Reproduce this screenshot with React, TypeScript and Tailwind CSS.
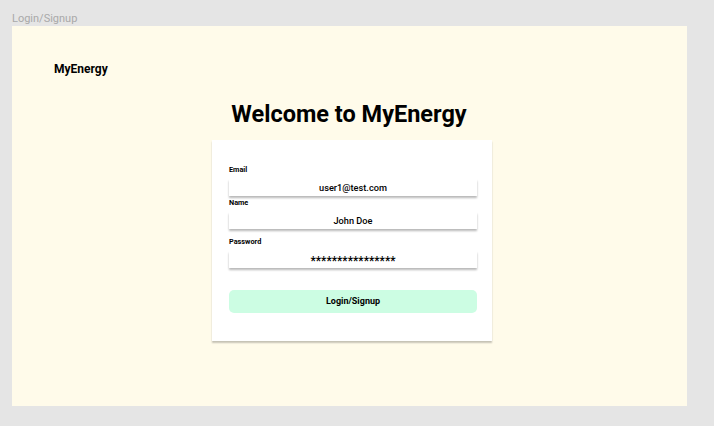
type FieldProps = {
    label: string,
    value: string,
    valueClass?: string,
};

function Field({ label, value, valueClass = "text-[9.2px]" }: FieldProps) {
    return (
        <div className="flex flex-col">
            <label className="text-[7.3px] leading-[8px] font-bold text-black mb-[5px]">{label}</label>
            <div className={`h-[17px] w-full bg-white flex items-center justify-center shadow-[0_1.5px_2px_rgba(0,0,0,0.28)] font-medium text-black ${valueClass}`}>
                {value}
            </div>
        </div>
    );
}

export default function App() {
    return (
        <div className="w-[714px] h-[426px] bg-[#e5e5e5] font-['Roboto',sans-serif] flex flex-col px-3 pt-3">
            <p className="text-[11px] leading-[13px] text-[#a9a9a9] mb-[1px]">Login/Signup</p>
            <main className="w-[675px] h-[380px] bg-[#fffbea] flex flex-col">
                <header className="pl-[42px] pt-[36px]">
                    <h2 className="text-[12px] leading-[14px] font-bold text-black">MyEnergy</h2>
                </header>
                <h1 className="mt-[24px] text-center text-[23.5px] leading-[28px] font-bold text-black pr-[1px]">Welcome to MyEnergy</h1>
                <section className="mt-[12px] ml-[200px] w-[280px] h-[201px] bg-white shadow-[0_2px_1.5px_rgba(0,0,0,0.22)] pl-[17px] pr-[15px] pt-[26px] flex flex-col">
                    <Field label="Email" value="user1@test.com" />
                    <div className="mt-[3px]">
                        <Field label="Name" value="John Doe" />
                    </div>
                    <div className="mt-[9px]">
                        <Field label="Password" value="****************" valueClass="text-[12px] pt-[2px]" />
                    </div>
                    <button className="mt-[22px] h-[23px] w-full rounded-[5px] bg-[#ccfde3] text-[9px] font-bold text-black">
                        Login/Signup
                    </button>
                </section>
            </main>
        </div>
    );
}
